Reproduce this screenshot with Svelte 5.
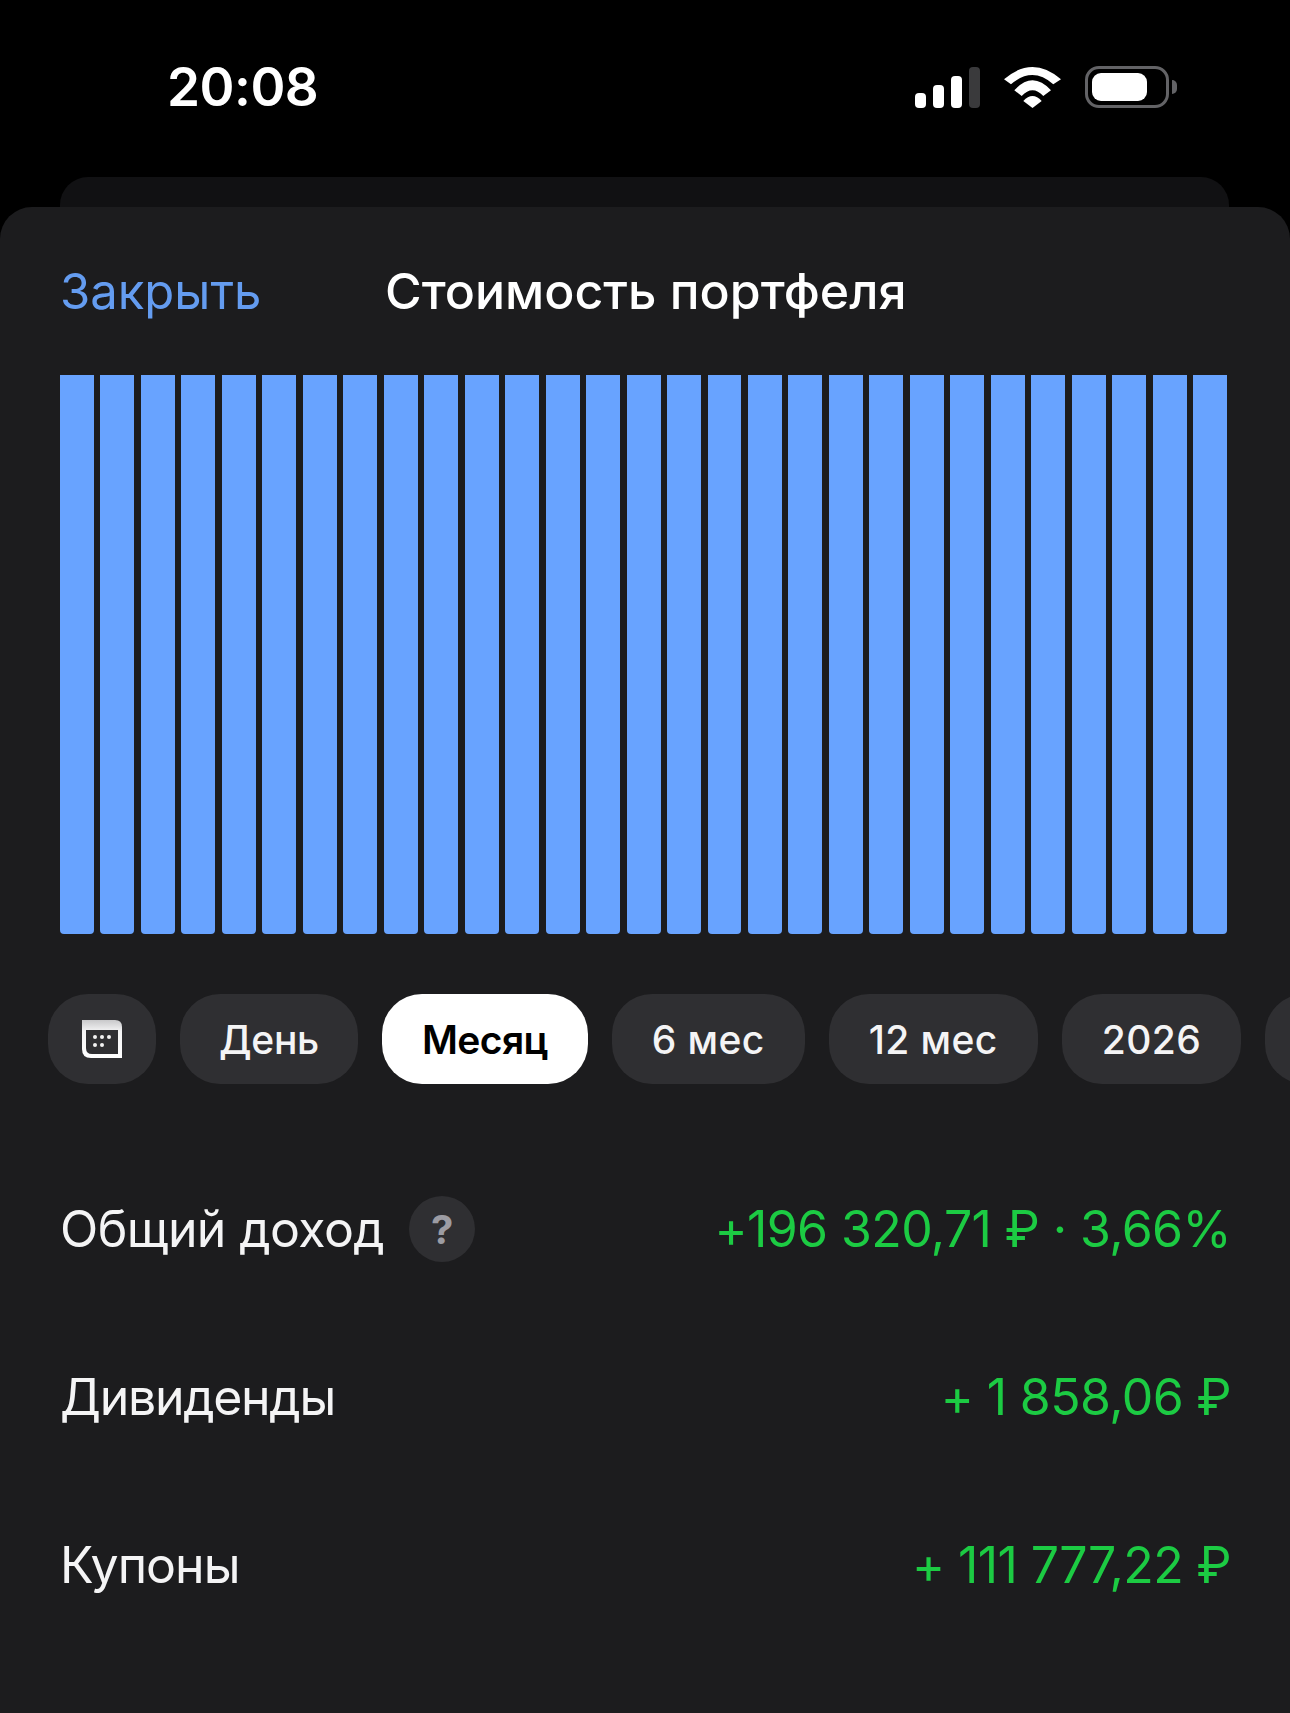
<script>
  const bars = Array.from({ length: 29 }, (_, i) => i);
  const chips = [
    { text: 'День' },
    { text: 'Месяц', active: true },
    { text: '6 мес', num: true },
    { text: '12 мес', num: true },
    { text: '2026', num: true }
  ];
  const rows = [
    { label: 'Общий доход', value: '+196 320,71 ₽ · 3,66%', help: true },
    { label: 'Дивиденды', value: '+ 1 858,06 ₽' },
    { label: 'Купоны', value: '+ 111 777,22 ₽' }
  ];
</script>

<div class="screen">
  <header class="status">
    <span class="time">20:08</span>
    <div class="status-icons">
      <svg class="signal" width="65" height="41" viewBox="0 0 65 41" aria-hidden="true">
        <rect x="0" y="26" width="11" height="15" rx="4" fill="#fff" />
        <rect x="18" y="18" width="11" height="23" rx="4" fill="#fff" />
        <rect x="36" y="9" width="11" height="32" rx="4" fill="#fff" />
        <rect x="54" y="0" width="11" height="41" rx="4" fill="#3a3a3c" />
      </svg>
      <svg class="wifi" width="57" height="41" viewBox="0 0 57 41" aria-hidden="true">
        <path d="M0 12.3 Q28.5 -12.3 57 12.3 L49.3 17.3 Q28.5 -1.3 7 17.3 Z" fill="#fff" />
        <path d="M10.3 23.3 Q28.5 3.3 47 23.3 L39.3 29 Q28.5 17.6 17.7 29 Z" fill="#fff" />
        <path d="M19.3 34 Q28.5 24 37.7 34 L28.5 41 Z" fill="#fff" />
      </svg>
      <div class="battery">
        <div class="battery-body"><div class="battery-fill"></div></div>
        <div class="battery-cap"></div>
      </div>
    </div>
  </header>

  <div class="back-card"></div>

  <main class="sheet">
    <div class="topbar">
      <span class="close">Закрыть</span>
      <span class="title">Стоимость портфеля</span>
    </div>

    <div class="chart">
      {#each bars as b (b)}
        <div class="bar"></div>
      {/each}
    </div>

    <div class="chips">
      <div class="chip icon-chip">
        <svg width="42" height="40" viewBox="0 0 42 40" aria-hidden="true">
          <defs>
            <linearGradient id="calTop" x1="0" y1="0" x2="0" y2="1">
              <stop offset="0" stop-color="#c8c8ca" />
              <stop offset="0.3" stop-color="#f4f4f5" />
              <stop offset="1" stop-color="#ffffff" />
            </linearGradient>
          </defs>
          <path d="M1 1 H34 Q41 1 41 8 V39 H10 Q1 39 1 30 Z" fill="url(#calTop)" />
          <path d="M5 11 H37 V35 H11 Q5 35 5 29 Z" fill="#2f2f32" />
          <g fill="#f2f2f3">
            <circle cx="14" cy="18" r="2" /><circle cx="21" cy="18" r="2" /><circle cx="28" cy="18" r="2" />
            <circle cx="14" cy="26" r="2" /><circle cx="21" cy="26" r="2" />
          </g>
        </svg>
      </div>
      {#each chips as c (c.text)}
        <div class="chip" class:active={c.active} class:num={c.num}>{c.text}</div>
      {/each}
      <div class="chip more"></div>
    </div>

    <div class="rows">
      {#each rows as r (r.label)}
        <div class="row">
          <div class="label">
            <span>{r.label}</span>
            {#if r.help}<span class="help">?</span>{/if}
          </div>
          <span class="value">{r.value}</span>
        </div>
      {/each}
    </div>
  </main>
</div>

<style>
  :global(body) { margin: 0; background: #000; }
  .screen {
    width: 1290px;
    height: 1713px;
    overflow: hidden;
    background: #000;
    color: #fff;
    font-family: Inter, "Noto Sans", sans-serif;
    display: flex;
    flex-direction: column;
  }
  .status {
    height: 177px;
    flex: none;
    box-sizing: border-box;
    padding: 60px 113px 0 167px;
    display: flex;
    justify-content: space-between;
    align-items: flex-start;
  }
  .time { font-size: 53px; font-weight: 600; line-height: 55px; letter-spacing: -0.5px; }
  .status-icons { display: flex; align-items: center; gap: 24px; padding-top: 6px; }
  .battery { display: flex; align-items: center; gap: 3px; }
  .battery-body {
    width: 84px; height: 42px; box-sizing: border-box;
    border: 3px solid #636366; border-radius: 14px; padding: 4px;
    display: flex;
  }
  .battery-fill { width: 55px; background: #fff; border-radius: 9px; }
  .battery-cap { width: 5px; height: 14px; background: #636366; border-radius: 0 5px 5px 0; }
  .back-card {
    height: 30px;
    flex: none;
    margin: 0 61px 0 60px;
    background: #111113;
    border-radius: 28px 28px 0 0;
  }
  .sheet {
    flex: 1;
    background: #1c1c1e;
    border-radius: 32px 32px 0 0;
    min-height: 0;
  }
  .topbar {
    display: flex;
    align-items: center;
    padding: 58px 0 0 60px;
    height: 52px;
  }
  .close { color: #649cf0; width: 325px; font-size: 49px; }
  .title { font-weight: 500; font-size: 50px; }
  .chart {
    display: flex;
    gap: 6.5px;
    margin: 58px 63px 0 60px;
    height: 559px;
  }
  .bar { flex: 1; background: #68a3ff; border-radius: 0 0 4px 4px; }
  .chips {
    display: flex;
    gap: 24px;
    margin-top: 60px;
    padding-left: 48px;
  }
  .chip {
    flex: none;
    height: 90px;
    box-sizing: border-box;
    padding: 0 39px;
    display: flex;
    align-items: center;
    background: #2f2f32;
    border-radius: 40px;
    font-size: 39px;
    letter-spacing: -0.3px;
    font-weight: 500;
    color: #f4f4f5;
  }
  .chip.active { background: #fff; color: #000; font-weight: 600; letter-spacing: -0.6px; padding: 0 40px; }
  .chip.num { padding: 0 40px; letter-spacing: 0.4px; }
  .icon-chip { padding: 0 33px; }
  .more { width: 100px; }
  .rows { margin-top: 112px; padding: 0 59px 0 60px; display: flex; flex-direction: column; gap: 102px; }
  .row {
    display: flex;
    justify-content: space-between;
    align-items: center;
    height: 66px;
    font-size: 50px;
  }
  .label { display: flex; align-items: center; gap: 25px; color: #f4f4f5; letter-spacing: -0.6px; }
  .row:nth-child(2) .label { letter-spacing: -1.3px; }
  .row:nth-child(3) .label { letter-spacing: -1px; }
  .help {
    width: 66px; height: 66px; border-radius: 50%;
    background: #2f2f32; color: #9c9ca3;
    font-size: 40px; font-weight: 700; letter-spacing: 0;
    display: flex; align-items: center; justify-content: center;
  }
  .value { color: #1ccb43; letter-spacing: -0.6px; }
</style>
